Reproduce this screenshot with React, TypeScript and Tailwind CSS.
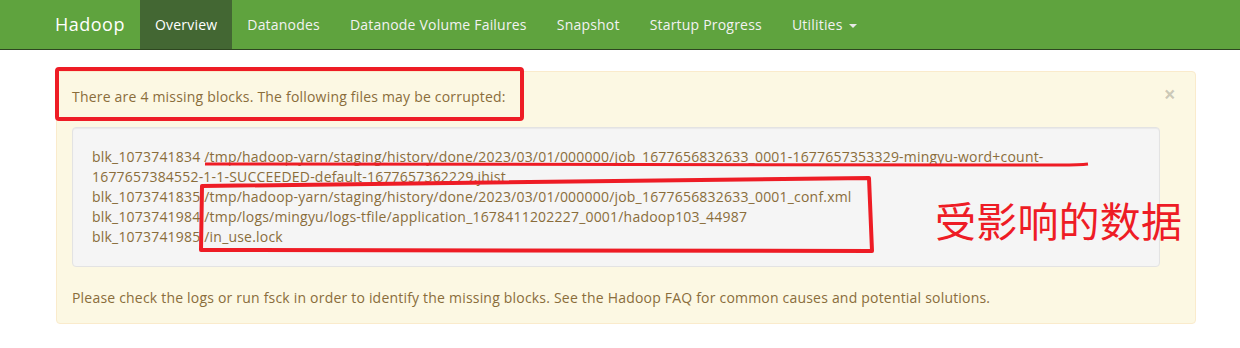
const navItems = ['Overview', 'Datanodes', 'Datanode Volume Failures', 'Snapshot', 'Startup Progress']

const missingLines = [
  'blk_1073741834 /tmp/hadoop-yarn/staging/history/done/2023/03/01/000000/job_1677656832633_0001-1677657353329-mingyu-word+count-',
  '1677657384552-1-1-SUCCEEDED-default-1677657362229.jhist',
  'blk_1073741835 /tmp/hadoop-yarn/staging/history/done/2023/03/01/000000/job_1677656832633_0001_conf.xml',
  'blk_1073741984 /tmp/logs/mingyu/logs-tfile/application_1678411202227_0001/hadoop103_44987',
  'blk_1073741985 /in_use.lock',
]

function Navbar() {
  return (
    <nav className="h-[50px] border-b border-[#2e4621] bg-[#5fa33e]">
      <div className="flex h-full pl-[40px]">
        <a className="px-[15px] text-[18px] leading-[49px] tracking-[0.5px] text-white">Hadoop</a>
        <ul className="flex">
          {navItems.map((item, i) => (
            <li key={item}>
              <a
                className={`block px-[15px] leading-[49px] text-[#f2f2f2] ${
                  i === 0 ? 'bg-[#436733] text-white' : ''
                }`}
              >
                {item}
              </a>
            </li>
          ))}
          <li>
            <a className="flex items-center gap-[6px] px-[15px] leading-[49px] text-[#f2f2f2]">
              Utilities
              <span className="mt-[2px] h-0 w-0 border-x-[4px] border-t-[4px] border-x-transparent border-t-[#e8e8e8]" />
            </a>
          </li>
        </ul>
      </div>
    </nav>
  )
}

// red markup drawn on top of the screenshot
function Annotations() {
  return (
    <>
      <svg className="pointer-events-none absolute left-0 top-0" width={1240} height={348}>
        <rect x={57} y={69} width={465} height={50} rx={2} fill="none" stroke="#ee1c25" strokeWidth={4} />
        <path d="M205 164 L1060 165 Q1080 165 1088 164" fill="none" stroke="#ee1c25" strokeWidth={3} />
        <polygon points="202,186 869,178 872,251 201,250" fill="none" stroke="#ee1c25" strokeWidth={4} strokeLinejoin="round" />
      </svg>
      <div className="pointer-events-none absolute left-[935px] top-[199px] font-['Noto_Sans_CJK_SC',sans-serif] text-[41px] leading-none text-[#ee1c25]">
        受影响的数据
      </div>
    </>
  )
}

export default function App() {
  return (
    <div className="relative min-h-[348px] bg-white font-['Open_Sans','Noto_Sans_CJK_SC',sans-serif] text-[14px] leading-[20px] tracking-[0.2px]">
      <Navbar />
      <div className="pl-[56px] pt-[21px]">
        <div className="relative w-[1140px] rounded-[4px] border border-[#faebcc] bg-[#fcf8e3] pb-[15px] pl-[15px] pr-[35px] pt-[15px] text-[#8a6d3b]">
          <button
            type="button"
            className="absolute right-[19px] top-[12px] text-[21px] font-bold leading-none text-black/20"
          >
            ×
          </button>
          <p>There are 4 missing blocks. The following files may be corrupted:</p>
          <div className="mt-[20px] rounded-[4px] border border-[#e3e3e3] bg-[#f5f5f5] p-[19px] shadow-[inset_0_1px_1px_rgba(0,0,0,0.05)]">
            {missingLines.map((line) => (
              <div key={line} className="whitespace-nowrap">
                {line}
              </div>
            ))}
          </div>
          <p className="mt-[21px]">
            Please check the logs or run fsck in order to identify the missing blocks. See the Hadoop FAQ for common
            causes and potential solutions.
          </p>
        </div>
      </div>
      <Annotations />
    </div>
  )
}
